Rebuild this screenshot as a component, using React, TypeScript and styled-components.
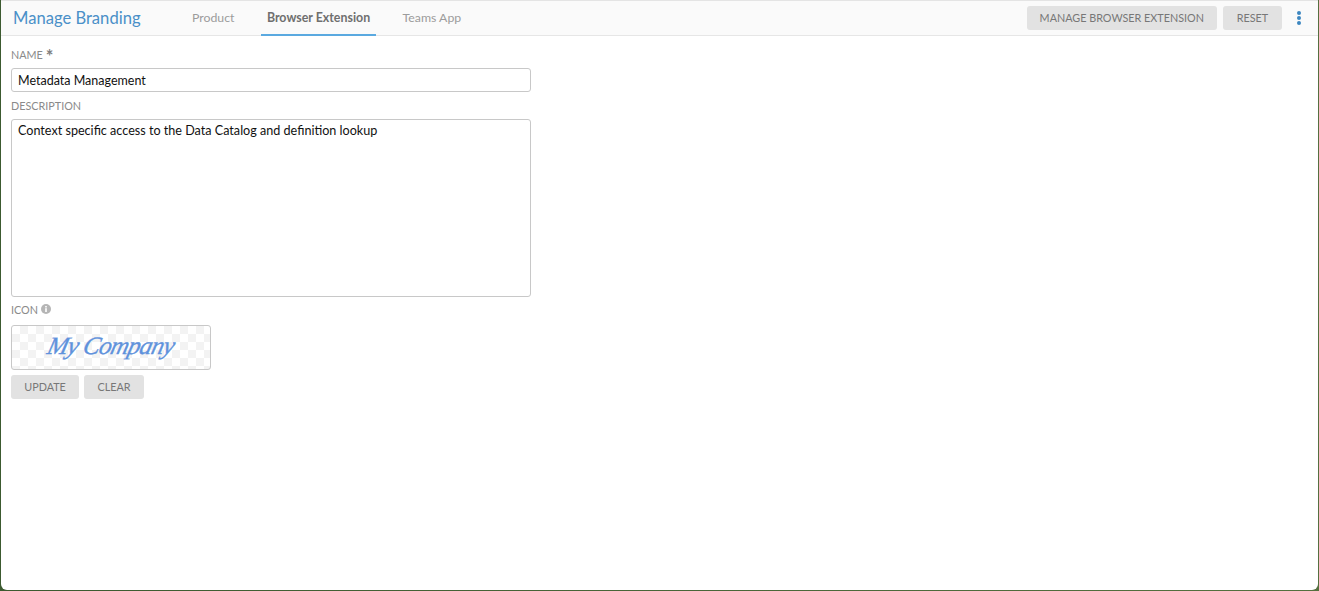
import React from "react";
import styled, { createGlobalStyle } from "styled-components";

const Global = createGlobalStyle`
  html, body { margin: 0; padding: 0; height: 100%; background: #2f4a24; }
  #root { height: 591px; }
  * { box-sizing: border-box; }
`;

const Shell = styled.div`
  width: 1319px; height: 591px; overflow: hidden;
  padding: 0 1px 1px 1px;
  background: linear-gradient(90deg, #3c5a30, #55703f);
  font-family: "Lato", "Noto Sans", sans-serif;
`;
const Panel = styled.div`
  height: 100%; background: #fff; border-radius: 0 0 6px 6px;
  display: flex; flex-direction: column;
`;
const Header = styled.header`
  height: 36px; flex: none; display: flex; align-items: stretch;
  background: #fafafa; border-top: 1px solid #e4e4e4; border-bottom: 1px solid #e6e6e6;
  padding: 0 17px 0 12px;
`;
const Title = styled.h1`
  margin: 0; width: 173px; align-self: center;
  font-size: 16.6px; font-weight: 400; color: #4a90c8; white-space: nowrap;
`;
const Tabs = styled.nav`display: flex; flex: 1; gap: 20.4px;`;
const Tab = styled.div<{ $active?: boolean }>`
  padding: 0 6px; display: flex; align-items: center; margin-bottom: -1px;
  font-size: ${(p) => (p.$active ? "12.4px" : "12.3px")};
  color: ${(p) => (p.$active ? "#6f6f6f" : "#9c9c9c")};
  font-weight: ${(p) => (p.$active ? 700 : 400)};
  border-bottom: 2px solid ${(p) => (p.$active ? "#5aa9e0" : "transparent")};
`;
const Actions = styled.div`display: flex; align-items: center; gap: 6px;`;
const Btn = styled.button<{ $min?: number }>`
  height: 24px; padding: 0 13px 1px; border: 0; border-radius: 3px; background: #e2e2e2;
  min-width: ${(p) => p.$min ?? 0}px;
  color: #777; font: 400 10.8px "Lato", "Noto Sans", sans-serif;
`;
const Dots = styled.svg`width: 4px; height: 14px; margin-left: 9px; fill: #3c86c0;`;
const Form = styled.main`padding: 11px 10px; width: 540px; display: flex; flex-direction: column;`;
const Label = styled.label`
  display: flex; align-items: center; gap: 3px; height: 16px; margin-top: -1px; margin-bottom: 6px;
  font-size: 10.8px; color: #8a8a8a;
`;
const Star = styled.span`font-size: 18px; line-height: 12px; font-weight: 700; color: #808080; padding-top: 3px;`;
const Input = styled.div`
  height: 24px; border: 1px solid #c8c8c8; border-radius: 3px; padding: 0 6px;
  display: flex; align-items: center; font-size: 12.5px; color: #111; margin-bottom: 6px;
`;
const TextArea = styled.div`
  height: 178px; border: 1px solid #c8c8c8; border-radius: 3px; padding: 3px 6px;
  font-size: 12.6px; color: #111; margin-bottom: 5px;
`;
const Logo = styled.div`
  width: 200px; height: 45px; border: 1px solid #c8c8c8; border-radius: 3px; padding-bottom: 4px;
  margin-top: 2px; margin-bottom: 5px; display: flex; align-items: center; justify-content: center;
  background-color: #fff;
  background-image: conic-gradient(#f3f3f3 25%, #fff 0 50%, #f3f3f3 0 75%, #fff 0);
  background-size: 16px 16px;
`;
const LogoText = styled.span`
  display: inline-block; transform: skewX(-14deg);
  font: italic 400 25px "Liberation Serif", serif; letter-spacing: -0.8px;
  color: #5f92dc; -webkit-text-stroke: 0.35px #5f92dc; white-space: nowrap;
`;
const Row = styled.div`display: flex; gap: 5px;`;

export default function App() {
  return (
    <Shell>
      <Global />
      <Panel>
        <Header>
          <Title>Manage Branding</Title>
          <Tabs>
            <Tab>Product</Tab>
            <Tab $active>Browser Extension</Tab>
            <Tab>Teams App</Tab>
          </Tabs>
          <Actions>
            <Btn>MANAGE BROWSER EXTENSION</Btn>
            <Btn $min={59}>RESET</Btn>
            <Dots viewBox="0 0 4 14"><circle cx="2" cy="2" r="2" /><circle cx="2" cy="7" r="2" /><circle cx="2" cy="12" r="2" /></Dots>
          </Actions>
        </Header>
        <Form>
          <Label>NAME <Star>*</Star></Label>
          <Input>Metadata Management</Input>
          <Label>DESCRIPTION</Label>
          <TextArea>Context specific access to the Data Catalog and definition lookup</TextArea>
          <Label>ICON
            <svg width="10" height="10" viewBox="0 0 10 10"><circle cx="5" cy="5" r="5" fill="#b5b5b5" /><rect x="4.2" y="4.2" width="1.6" height="3.8" fill="#fff" /><rect x="4.2" y="2" width="1.6" height="1.5" fill="#fff" /></svg>
          </Label>
          <Logo><LogoText>My Company</LogoText></Logo>
          <Row><Btn $min={68}>UPDATE</Btn><Btn $min={60}>CLEAR</Btn></Row>
        </Form>
      </Panel>
    </Shell>
  );
}
